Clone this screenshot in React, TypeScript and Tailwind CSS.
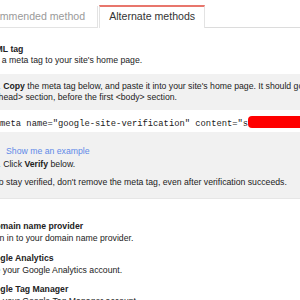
import React from 'react';

export default function App() {
  return (
    <div className="w-[300px] h-[300px] overflow-hidden bg-white text-[#222] font-['Liberation_Sans',Arial,sans-serif]">
      {/* Tabs */}
      <div className="flex items-end pt-[5px] ml-[-35px] w-[335px]">
        <div className="h-[22px] pl-[10px] pr-[12px] pt-[3px] border-r border-b border-[#e3e3e3] text-[10.6px] leading-[14px] text-[#9a9a9a] whitespace-nowrap">
          Recommended method
        </div>
        <div className="h-[23px] ml-[1px] px-[9px] pt-[2px] border-t-2 border-t-[#e8766c] border-x border-x-[#e3e3e3] text-[10.6px] leading-[14px] text-[#333] whitespace-nowrap">
          Alternate methods
        </div>
        <div className="flex-1 h-[22px] border-b border-[#dcdcdc]" />
      </div>

      {/* Content */}
      <div className="ml-[-16px] w-[340px] text-[8.7px] whitespace-nowrap">
        <div className="mt-[16px] leading-[11px]">
          <div className="font-bold">HTML tag</div>
          <div>Add a meta tag to your site's home page.</div>
        </div>

        <div className="mt-[8px] bg-[#f1f1f1] border-b border-[#e6e6e6] pt-[7px] pb-[10px] leading-[11px]">
          <div className="pl-[9.5px]">
            <div>
              1. <span className="font-bold">Copy</span> the meta tag below, and paste it into your site's home page. It should go in the
            </div>
            <div>&lt;head&gt; section, before the first &lt;body&gt; section.</div>
          </div>

          <div className="mt-[7px] bg-white pl-[10.7px] pt-[8px] pb-[2px] leading-[11px] font-['Liberation_Mono','Courier_New',monospace] text-[8.8px] text-[#1a1a1a] flex items-center">
            <span>&lt;meta name="google-site-verification" content="s</span>
            <span className="inline-block w-[70px] h-[12px] bg-[#ff0000] rounded-[4px] -translate-y-[2px]" />
          </div>

          <div className="mt-[14px] pl-[22px] text-[#5f8ae8]">Show me an example</div>
          <div className="mt-[2px] pl-[9.5px]">
            2. Click <span className="font-bold">Verify</span> below.
          </div>
          <div className="mt-[7px] pl-[10.5px]">
            To stay verified, don't remove the meta tag, even after verification succeeds.
          </div>
        </div>

        <div className="mt-[21px] leading-[12px] pl-[5px]">
          <div className="font-bold">Domain name provider</div>
          <div className="-ml-[2px]">Sign in to your domain name provider.</div>
        </div>

        <div className="mt-[8px] leading-[12px]">
          <div className="font-bold -ml-[1px]">Google Analytics</div>
          <div className="ml-[1px]">Use your Google Analytics account.</div>
        </div>

        <div className="mt-[7px] leading-[12px]">
          <div className="font-bold -ml-[1px]">Google Tag Manager</div>
          <div className="ml-[1px]">Use your Google Tag Manager account.</div>
        </div>
      </div>
    </div>
  );
}
